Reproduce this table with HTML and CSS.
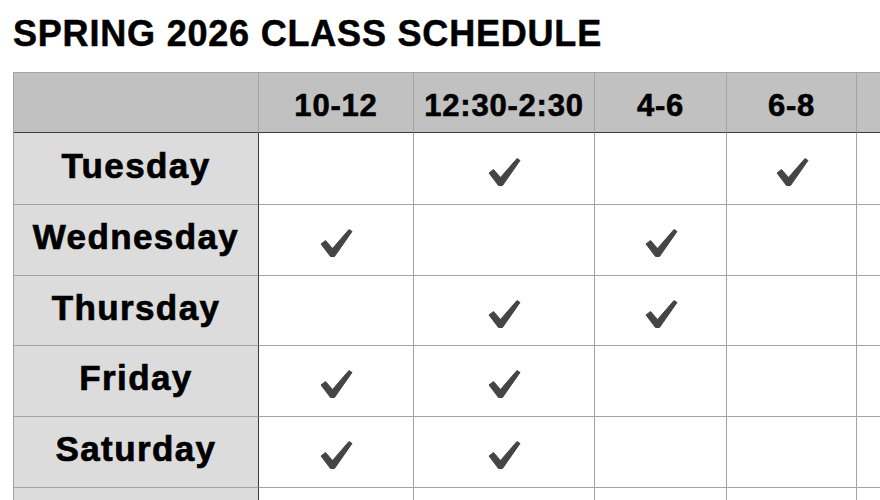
FILE: index.html
```html
<!DOCTYPE html>
<html>
<head>
<meta charset="utf-8">
<link rel="stylesheet" href="styles.css">
</head>
<body>
<h1 class="title">SPRING 2026 CLASS SCHEDULE</h1>
<div class="grid">
  <div class="cell head corner"></div>
  <div class="cell head">10-12</div>
  <div class="cell head">12:30-2:30</div>
  <div class="cell head">4-6</div>
  <div class="cell head">6-8</div>
  <div class="cell head"></div>

  <div class="cell day">Tuesday</div>
  <div class="cell"></div>
  <div class="cell"><svg class="check" viewBox="0 0 36 32"><path d="M3 17 L7.5 13.5 L14.5 21.5 L31 2.5 L34 4.5 L16.5 29.5 L12.5 29.5 Z"/></svg></div>
  <div class="cell"></div>
  <div class="cell"><svg class="check" viewBox="0 0 36 32"><path d="M3 17 L7.5 13.5 L14.5 21.5 L31 2.5 L34 4.5 L16.5 29.5 L12.5 29.5 Z"/></svg></div>
  <div class="cell"></div>

  <div class="cell day">Wednesday</div>
  <div class="cell"><svg class="check" viewBox="0 0 36 32"><path d="M3 17 L7.5 13.5 L14.5 21.5 L31 2.5 L34 4.5 L16.5 29.5 L12.5 29.5 Z"/></svg></div>
  <div class="cell"></div>
  <div class="cell"><svg class="check" viewBox="0 0 36 32"><path d="M3 17 L7.5 13.5 L14.5 21.5 L31 2.5 L34 4.5 L16.5 29.5 L12.5 29.5 Z"/></svg></div>
  <div class="cell"></div>
  <div class="cell"></div>

  <div class="cell day">Thursday</div>
  <div class="cell"></div>
  <div class="cell"><svg class="check" viewBox="0 0 36 32"><path d="M3 17 L7.5 13.5 L14.5 21.5 L31 2.5 L34 4.5 L16.5 29.5 L12.5 29.5 Z"/></svg></div>
  <div class="cell"><svg class="check" viewBox="0 0 36 32"><path d="M3 17 L7.5 13.5 L14.5 21.5 L31 2.5 L34 4.5 L16.5 29.5 L12.5 29.5 Z"/></svg></div>
  <div class="cell"></div>
  <div class="cell"></div>

  <div class="cell day">Friday</div>
  <div class="cell"><svg class="check" viewBox="0 0 36 32"><path d="M3 17 L7.5 13.5 L14.5 21.5 L31 2.5 L34 4.5 L16.5 29.5 L12.5 29.5 Z"/></svg></div>
  <div class="cell"><svg class="check" viewBox="0 0 36 32"><path d="M3 17 L7.5 13.5 L14.5 21.5 L31 2.5 L34 4.5 L16.5 29.5 L12.5 29.5 Z"/></svg></div>
  <div class="cell"></div>
  <div class="cell"></div>
  <div class="cell"></div>

  <div class="cell day">Saturday</div>
  <div class="cell"><svg class="check" viewBox="0 0 36 32"><path d="M3 17 L7.5 13.5 L14.5 21.5 L31 2.5 L34 4.5 L16.5 29.5 L12.5 29.5 Z"/></svg></div>
  <div class="cell"><svg class="check" viewBox="0 0 36 32"><path d="M3 17 L7.5 13.5 L14.5 21.5 L31 2.5 L34 4.5 L16.5 29.5 L12.5 29.5 Z"/></svg></div>
  <div class="cell"></div>
  <div class="cell"></div>
  <div class="cell"></div>

  <div class="cell day"></div>
  <div class="cell"></div>
  <div class="cell"></div>
  <div class="cell"></div>
  <div class="cell"></div>
  <div class="cell"></div>
</div>
</body>
</html>
```

FILE: styles.css
```css
html, body {
  margin: 0;
  padding: 0;
  background: #fff;
  overflow: hidden;
  width: 880px;
  height: 500px;
}
body {
  font-family: "Liberation Sans", Arial, Helvetica, sans-serif;
  color: #000;
}
.title {
  margin: 16px 0 0 13px;
  font-size: 36px;
  line-height: 36px;
  letter-spacing: 0.8px;
  font-weight: bold;
  white-space: nowrap;
  -webkit-text-stroke: 0.5px #000;
}
.grid {
  margin: 20px 0 0 13px;
  display: grid;
  grid-template-columns: 245px 155px 181px 132px 130px 130px;
  grid-template-rows: 60px 72px 71px 70px 71px 71px 71px;
  width: max-content;
  border-top: 1px solid #a3a3a3;
  border-left: 1px solid #a3a3a3;
}
.cell {
  box-sizing: border-box;
  border-right: 1px solid #a3a3a3;
  border-bottom: 1px solid #a3a3a3;
  display: flex;
  align-items: center;
  justify-content: center;
  font-weight: bold;
  background: #fff;
}
.head {
  background: #c0c1c0;
  border-bottom: 1px solid #3a3a3a;
  font-size: 31px;
  letter-spacing: 0.8px;
  padding-top: 6px;
  -webkit-text-stroke: 0.6px #000;
}
.day {
  background: #dcdcdc;
  border-right: 1px solid #3a3a3a;
  font-size: 35px;
  letter-spacing: 1.4px;
  padding-bottom: 6px;
  -webkit-text-stroke: 0.7px #000;
}
.corner {
  border-right-color: #a3a3a3;
}
.check {
  width: 36px;
  height: 32px;
  margin-top: 6px;
}
.check path {
  fill: #454545;
  stroke: #454545;
  stroke-width: 1;
  stroke-linejoin: round;
}
```
